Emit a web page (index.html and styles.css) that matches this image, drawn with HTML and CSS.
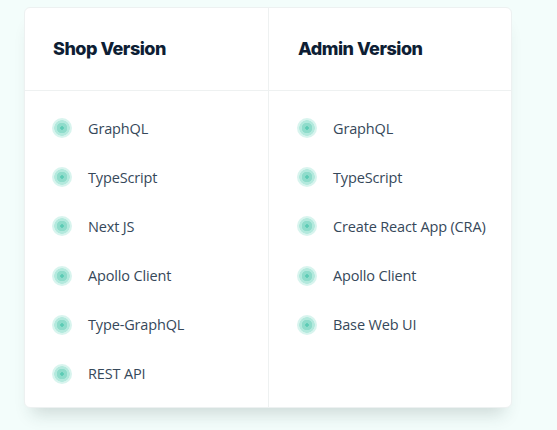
FILE: index.html
```html
<!DOCTYPE html>
<html>
<head>
<meta charset="utf-8">
<link rel="stylesheet" href="styles.css">
</head>
<body>
<div class="card">
  <div class="col">
    <div class="head"><h3>Shop Version</h3></div>
    <ul class="list">
      <li><span class="dot"></span>GraphQL</li>
      <li><span class="dot"></span>TypeScript</li>
      <li><span class="dot"></span>Next JS</li>
      <li><span class="dot"></span>Apollo Client</li>
      <li><span class="dot"></span>Type-GraphQL</li>
      <li><span class="dot"></span>REST API</li>
    </ul>
  </div>
  <div class="col">
    <div class="head"><h3>Admin Version</h3></div>
    <ul class="list">
      <li><span class="dot"></span>GraphQL</li>
      <li><span class="dot"></span>TypeScript</li>
      <li><span class="dot"></span>Create React App (CRA)</li>
      <li><span class="dot"></span>Apollo Client</li>
      <li><span class="dot"></span>Base Web UI</li>
    </ul>
  </div>
</div>
</body>
</html>
```
FILE: styles.css
```css
html, body {
  margin: 0;
  padding: 0;
  background: #f3fdfb;
  width: 557px;
  height: 430px;
  overflow: hidden;
}
body {
  padding: 7px 0 0 24px;
  box-sizing: border-box;
  font-family: "Open Sans", sans-serif;
}
.card {
  width: 488px;
  height: 401px;
  background: #fff;
  border: 1px solid #edf1f1;
  border-radius: 6px;
  box-sizing: border-box;
  display: grid;
  grid-template-columns: 243px 1fr;
  box-shadow: 0 14px 16px -8px rgba(40, 60, 60, 0.18);
}
.col + .col {
  border-left: 1px solid #eef1f1;
}
.head {
  height: 83px;
  box-sizing: border-box;
  border-bottom: 1px solid #eef1f1;
  display: flex;
  align-items: center;
  padding: 0 28px;
}
.head h3 {
  margin: 0;
  font-family: "Inter", sans-serif;
  font-weight: 800;
  font-size: 18px;
  letter-spacing: -0.5px;
  color: #0e1e34;
  margin-top: -2px;
}
.col + .col .head { padding-left: 29px; }
.list {
  list-style: none;
  margin: 0;
  padding: 27px 0 0 27px;
  display: flex;
  flex-direction: column;
  gap: 29.2px;
}
.col + .col .list { padding-left: 28px; }
.list li {
  display: flex;
  align-items: center;
  height: 20px;
  font-size: 14.5px;
  color: #36485a;
  letter-spacing: -0.15px;
}
.dot {
  width: 20px;
  height: 20px;
  border-radius: 50%;
  margin-right: 16px;
  flex: none;
  background: radial-gradient(circle, #5ccbb5 0 1.5px, #8fdccb 2px 5px, #b3e9dd 5.5px 7.5px, #d8f4ee 8px 10px);
}
```
